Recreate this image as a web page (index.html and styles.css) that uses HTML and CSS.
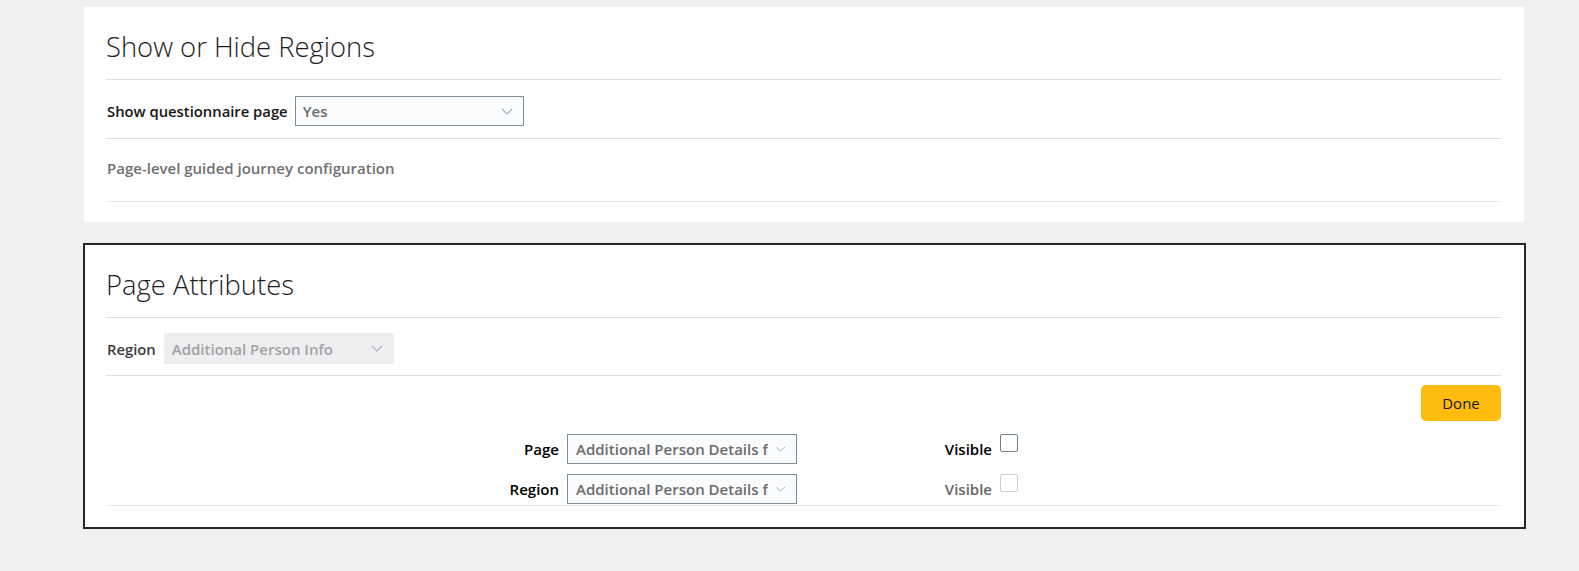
FILE: index.html
```html
<!DOCTYPE html>
<html lang="en">
<head>
	<meta charset="utf-8">
	<title>Show or Hide Regions</title>
	<meta name="viewport" content="width=device-width, initial-scale=1">
	<link rel="stylesheet" href="styles.css">
</head>
<body>
	<div class="page">
		<div class="card">
			<h2 class="card_title">Show or Hide Regions</h2>
			<div class="field_row">
				<label class="field_label">Show questionnaire page</label>
				<div class="select select_yes">
					<span class="select_text">Yes</span>
					<svg class="chevron" width="12" height="7" viewBox="0 0 12 7"><path d="M1 1l5 5 5-5" fill="none" stroke="#a3a9af" stroke-width="1.1"/></svg>
				</div>
			</div>
			<div class="sub_row">Page-level guided journey configuration</div>
		</div>

		<div class="card card_active">
			<h2 class="card_title">Page Attributes</h2>
			<div class="field_row region_row">
				<label class="field_label muted_label">Region</label>
				<div class="select select_disabled">
					<span class="select_text">Additional Person Info</span>
					<svg class="chevron" width="12" height="7" viewBox="0 0 12 7"><path d="M1 1l5 5 5-5" fill="none" stroke="#abafb4" stroke-width="1.1"/></svg>
				</div>
			</div>
			<div class="actions">
				<button class="btn_done">Done</button>
			</div>
			<div class="attr_grid">
				<label class="attr_label">Page</label>
				<div class="select select_small">
					<span class="select_text">Additional Person Details for Applicant</span>
					<svg class="chevron" width="11" height="6" viewBox="0 0 11 6"><path d="M1 .8l4.5 4.5L10 .8" fill="none" stroke="#a8aeb5" stroke-width="1"/></svg>
				</div>
				<label class="attr_label">Visible</label>
				<span class="checkbox"></span>

				<label class="attr_label">Region</label>
				<div class="select select_small">
					<span class="select_text">Additional Person Details for Applicant</span>
					<svg class="chevron" width="11" height="6" viewBox="0 0 11 6"><path d="M1 .8l4.5 4.5L10 .8" fill="none" stroke="#a8aeb5" stroke-width="1"/></svg>
				</div>
				<label class="attr_label disabled_label">Visible</label>
				<span class="checkbox checkbox_disabled"></span>
			</div>
		</div>
	</div>
</body>
</html>
```

FILE: styles.css
```css
body {
	margin: 0;
	background: #f0f0f0;
	font-family: "Open Sans", "Noto Sans", sans-serif;
	font-size: 15px;
	color: #161513;
}
.page {
	padding: 7px 0 0 84px;
	width: 1440px;
}
.card {
	background: #fff;
	padding: 22px 23px 20px 22px;
}
.card_active {
	margin-top: 21px;
	margin-left: -1px;
	border: 2px solid #262626;
	padding: 22px 23px 21px 21px;
	width: 1395px;
}
.card_title {
	margin: 0;
	font-size: 27.4px;
	font-weight: 300;
	line-height: 36px;
	color: #1d1d1d;
	padding-bottom: 14px;
	border-bottom: 1px solid #d6dee6;
}
.field_row {
	display: flex;
	align-items: center;
	gap: 7px;
	padding: 16px 0 12px 1px;
	border-bottom: 1px solid #d6dee6;
}
.region_row {
	padding: 15px 0 11px 1px;
	gap: 8px;
}
.field_label {
	font-weight: 600;
	font-size: 14.8px;
}
.muted_label {
	color: #3b3b3b;
}
.select {
	display: flex;
	align-items: center;
	box-sizing: border-box;
	height: 30px;
	padding: 0 10px 0 7px;
	border: 1px solid #7b8b98;
	background: #fbfcfe;
	color: #6b6b6b;
	font-weight: 600;
	font-size: 15px;
}
.select_text {
	flex: 1;
	white-space: nowrap;
	overflow: hidden;
}
.chevron {
	flex: none;
	margin-left: 6px;
}
.select_yes {
	width: 229px;
}
.select_disabled {
	width: 230px;
	height: 31px;
	border: none;
	background: #eeeef0;
	color: #a2a2a2;
	padding: 0 11px 0 8px;
}
.select_small {
	width: 230px;
	padding: 0 10px 0 8px;
}
.select_small .select_text {
	margin-right: 1px;
}
.sub_row {
	padding: 19px 0 23px 1px;
	line-height: 20px;
	color: #707070;
	font-weight: 600;
	border-bottom: 1px solid #ebebeb;
}
.actions {
	display: flex;
	justify-content: flex-end;
	padding: 9px 0 0 0;
}
.btn_done {
	width: 80px;
	height: 36px;
	border: none;
	border-radius: 5px;
	background: #ffbc0f;
	color: #161513;
	font-family: inherit;
	font-size: 15px;
	font-weight: 500;
}
.attr_grid {
	display: grid;
	grid-template-columns: 453px 230px 187px 18px;
	column-gap: 8px;
	row-gap: 10px;
	align-items: center;
	margin-top: 13px;
	padding-bottom: 1px;
	border-bottom: 1px solid #ebebeb;
}
.attr_label {
	text-align: right;
	font-weight: 600;
	color: #000;
}
.disabled_label {
	color: #666;
}
.checkbox {
	display: block;
	box-sizing: border-box;
	width: 18px;
	height: 18px;
	border: 1px solid #6e808e;
	border-radius: 2px;
	background: #fff;
	margin-top: -12px;
}
.checkbox_disabled {
	border-color: #cfcfcf;
}
```
